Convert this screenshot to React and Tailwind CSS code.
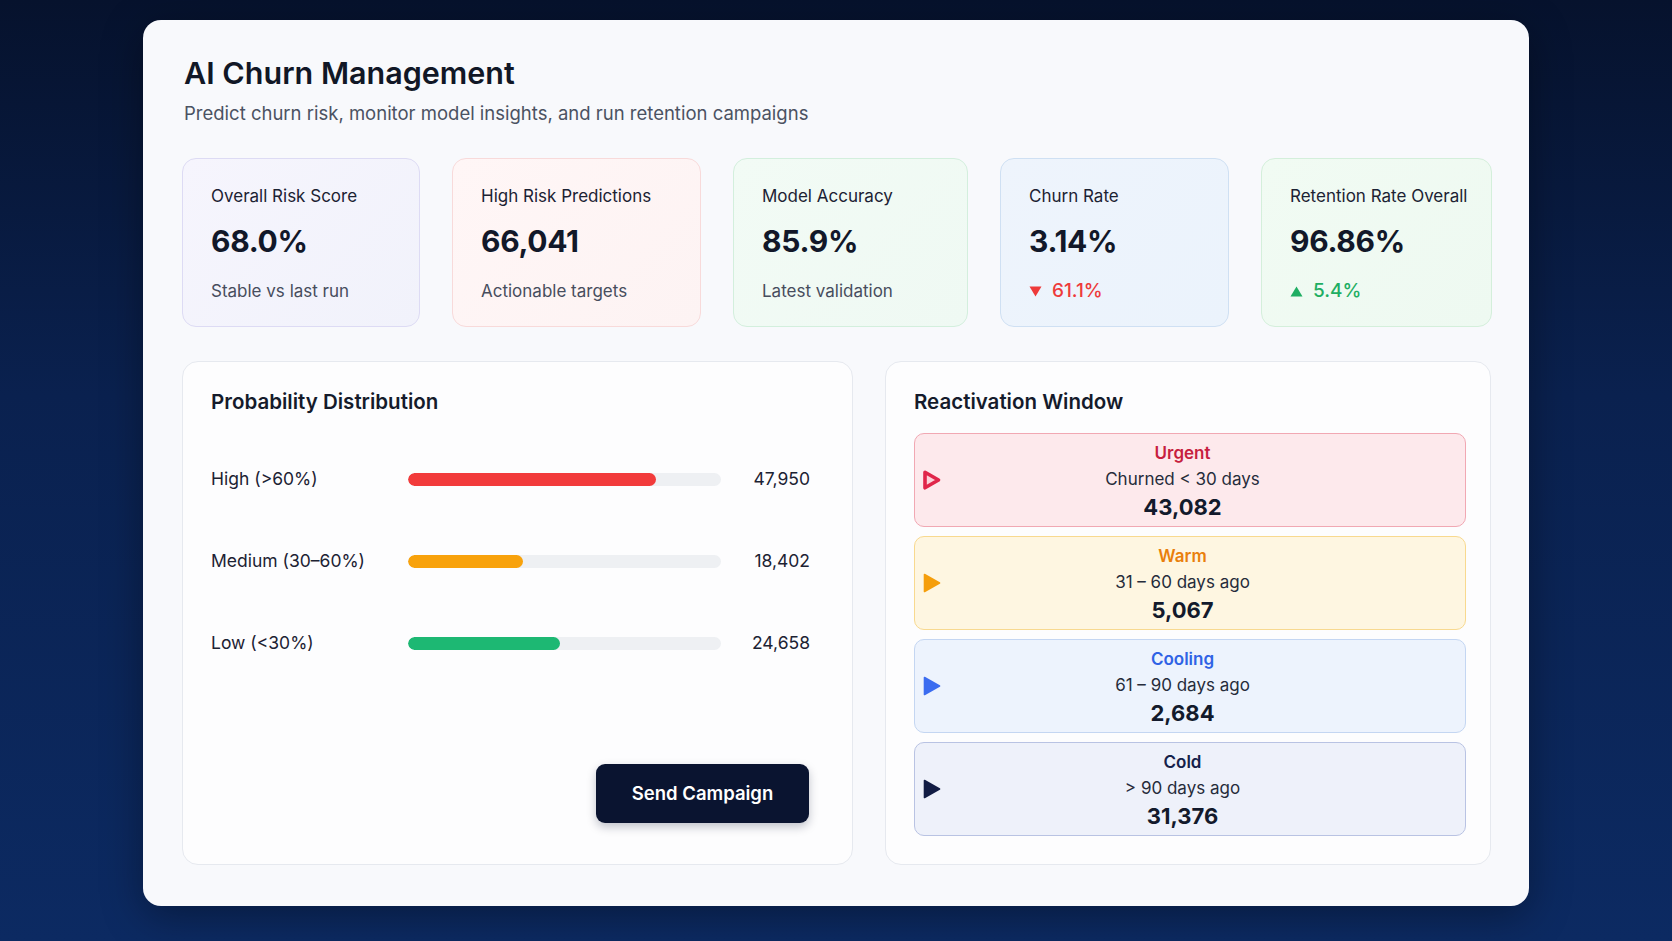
import React from "react";

const stats = [
  {
    label: "Overall Risk Score",
    value: "68.0%",
    sub: "Stable vs last run",
    box: "bg-[linear-gradient(135deg,#f6f5fd_0%,#f1f2fb_100%)] border-[#dddbf4]",
  },
  {
    label: "High Risk Predictions",
    value: "66,041",
    sub: "Actionable targets",
    box: "bg-[linear-gradient(135deg,#fff6f6_0%,#fdf3f3_100%)] border-[#f8dada]",
  },
  {
    label: "Model Accuracy",
    value: "85.9%",
    sub: "Latest validation",
    box: "bg-[linear-gradient(135deg,#f2fbf5_0%,#eff9f3_100%)] border-[#d3efdd]",
  },
  {
    label: "Churn Rate",
    value: "3.14%",
    trend: "down",
    sub: "61.1%",
    box: "bg-[linear-gradient(135deg,#eef4fc_0%,#ebf3fc_100%)] border-[#cfe0f3]",
  },
  {
    label: "Retention Rate Overall",
    value: "96.86%",
    trend: "up",
    sub: "5.4%",
    box: "bg-[linear-gradient(135deg,#f1fbf3_0%,#eef9f1_100%)] border-[#d4efdb]",
  },
];

const bars = [
  { label: "High (>60%)", value: "47,950", pct: 79.2, fill: "bg-[#f23b3b]" },
  { label: "Medium (30–60%)", value: "18,402", pct: 36.9, fill: "bg-[#f8a20c]" },
  { label: "Low (<30%)", value: "24,658", pct: 48.5, fill: "bg-[#1db873]" },
];

const windows = [
  {
    title: "Urgent",
    range: "Churned < 30 days",
    count: "43,082",
    box: "bg-[#fde9ec] border-[#f1a8b3]",
    text: "text-[#c71f3f]",
    icon: "outline",
    color: "#e0264a",
  },
  {
    title: "Warm",
    range: "31 – 60 days ago",
    count: "5,067",
    box: "bg-[#fef6e1] border-[#f8d98f]",
    text: "text-[#e97f0c]",
    icon: "solid",
    color: "#f59e0b",
  },
  {
    title: "Cooling",
    range: "61 – 90 days ago",
    count: "2,684",
    box: "bg-[#edf3fd] border-[#c4d6f2]",
    text: "text-[#2f62e5]",
    icon: "solid",
    color: "#3b6cf0",
  },
  {
    title: "Cold",
    range: "> 90 days ago",
    count: "31,376",
    box: "bg-[#eef1fa] border-[#b9c3e3]",
    text: "text-[#15214a]",
    icon: "solid",
    color: "#121c44",
  },
];

function TrendArrow({ dir }) {
  const up = dir === "up";
  return (
    <svg width="13" height="11" viewBox="0 0 13 11" className="shrink-0">
      {up ? (
        <path d="M6.5 0.5 L12.5 10.5 L0.5 10.5 Z" fill="#1fae63" />
      ) : (
        <path d="M0.5 0.5 L12.5 0.5 L6.5 10.5 Z" fill="#ee3a3a" />
      )}
    </svg>
  );
}

function PlayIcon({ kind, color }) {
  if (kind === "outline") {
    return (
      <svg width="20" height="22" viewBox="0 0 20 22" className="shrink-0">
        <path
          d="M3 3.2 L16.5 11 L3 18.8 Z"
          fill="#fbd3da"
          stroke={color}
          strokeWidth="3.6"
          strokeLinejoin="round"
        />
      </svg>
    );
  }
  return (
    <svg width="20" height="22" viewBox="0 0 20 22" className="shrink-0">
      <path
        d="M2.5 2.5 L17.5 11 L2.5 19.5 Z"
        fill={color}
        stroke={color}
        strokeWidth="1.6"
        strokeLinejoin="round"
      />
    </svg>
  );
}

function StatCard({ s }) {
  return (
    <div className={`h-[169px] rounded-[14px] border px-7 pt-[25px] ${s.box}`}>
      <div className="whitespace-nowrap text-[17px] leading-6 text-[#1c2233]">{s.label}</div>
      <div className="mt-[15px] text-[30px] leading-9 font-bold tracking-[-0.01em] text-[#121829]">
        {s.value}
      </div>
      {s.trend ? (
        <div
          className={`mt-[20px] flex items-center gap-[10px] text-[19px] leading-6 font-medium ${
            s.trend === "up" ? "text-[#1fae63]" : "text-[#ee3a3a]"
          }`}
        >
          <TrendArrow dir={s.trend} />
          <span>{s.sub}</span>
        </div>
      ) : (
        <div className="mt-[20px] text-[17px] leading-6 text-[#474d5d]">{s.sub}</div>
      )}
    </div>
  );
}

export default function App() {
  return (
    <div className="w-[1672px] h-[941px] overflow-hidden flex justify-center pt-5 bg-[linear-gradient(180deg,#06122d_0%,#0a214f_42%,#0c2a62_100%)] font-['Inter',sans-serif]">
      <div className="w-[1386px] h-[886px] rounded-[18px] bg-[#f8f9fc] pl-[39px] pr-[37px] pt-[35px] shadow-[0_10px_40px_rgba(0,0,0,0.35)]">
        <h1 className="ml-[2px] text-[30.5px] leading-9 font-semibold text-[#111726]">
          AI Churn Management
        </h1>
        <p className="ml-[2px] mt-[10px] text-[18.5px] leading-6 text-[#4b5262]">
          Predict churn risk, monitor model insights, and run retention campaigns
        </p>

        <div className="mt-[33px] grid grid-cols-[238px_249px_235px_229px_231px] gap-8">
          {stats.map((s) => (
            <StatCard key={s.label} s={s} />
          ))}
        </div>

        <div className="mt-[34px] grid grid-cols-[671px_606px] gap-8 h-[504px]">
          {/* Probability distribution */}
          <div className="flex flex-col rounded-2xl border border-[#e6e9ef] bg-[#fdfdfe] pl-7 pr-[42px] pt-[26px] pb-[41px]">
            <h2 className="text-[20.5px] leading-7 font-semibold text-[#151b2b]">
              Probability Distribution
            </h2>
            <div className="mt-[51px] flex flex-col gap-[58px]">
              {bars.map((b) => (
                <div
                  key={b.label}
                  className="grid grid-cols-[197px_313px_1fr] items-center h-6"
                >
                  <span className="text-[17.5px] leading-6 text-[#1c2233]">{b.label}</span>
                  <div className="h-[13px] rounded-full bg-[#eef0f3] overflow-hidden">
                    <div
                      className={`h-full rounded-full ${b.fill}`}
                      style={{ width: `${b.pct}%` }}
                    />
                  </div>
                  <span className="text-right text-[17.5px] leading-6 text-[#1c2233]">
                    {b.value}
                  </span>
                </div>
              ))}
            </div>
            <button className="mt-auto self-end mr-[1px] w-[213px] h-[59px] rounded-[9px] bg-[#0a1430] text-white text-[18.5px] font-semibold shadow-[0_4px_10px_rgba(10,20,48,0.25)]">
              Send Campaign
            </button>
          </div>

          {/* Reactivation window */}
          <div className="flex flex-col rounded-2xl border border-[#e6e9ef] bg-[#fdfdfe] pl-7 pr-6 pt-[26px]">
            <h2 className="text-[20.5px] leading-7 font-semibold text-[#151b2b]">
              Reactivation Window
            </h2>
            <div className="mt-[17px] flex flex-col gap-[9px]">
              {windows.map((w) => (
                <div
                  key={w.title}
                  className={`h-[94px] rounded-[10px] border flex items-center pl-[7px] pr-[42px] ${w.box}`}
                >
                  <PlayIcon kind={w.icon} color={w.color} />
                  <div className="flex-1 flex flex-col items-center pt-[3px]">
                    <span className={`text-[17px] leading-[22px] font-semibold ${w.text}`}>
                      {w.title}
                    </span>
                    <span className="mt-1 text-[17px] leading-[22px] text-[#262c3b]">
                      {w.range}
                    </span>
                    <span className="mt-[3px] text-[22px] leading-7 font-bold text-[#131a2c]">
                      {w.count}
                    </span>
                  </div>
                </div>
              ))}
            </div>
          </div>
        </div>
      </div>
    </div>
  );
}
